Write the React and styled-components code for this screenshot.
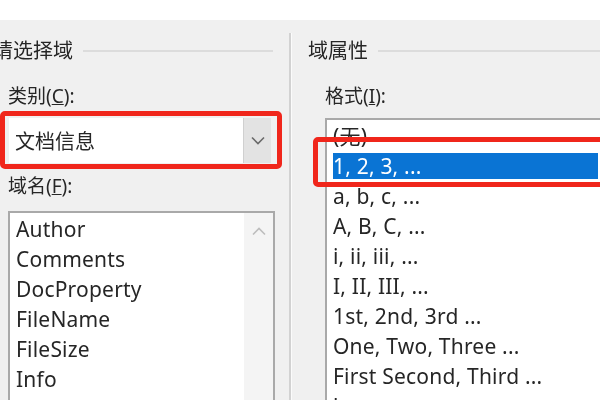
import styled, { createGlobalStyle } from "styled-components";

const GlobalStyle = createGlobalStyle`
  html, body {
    margin: 0;
    padding: 0;
    background: #f0f0f0;
  }
  *, *::before, *::after {
    box-sizing: border-box;
  }
`;

const fieldNames = ["Author", "Comments", "DocProperty", "FileName", "FileSize", "Info", "Keywords"];
const formats = [
  "(无)",
  "1, 2, 3, ...",
  "a, b, c, ...",
  "A, B, C, ...",
  "i, ii, iii, ...",
  "I, II, III, ...",
  "1st, 2nd, 3rd ...",
  "One, Two, Three ...",
  "First Second, Third ...",
  "hex ...",
];

const App = () => {
  return (
    <>
      <GlobalStyle />
      <Page>
        <TitleStrip />
        <Columns>
          <Pane $width="289px">
            <GroupHeader>
              <GroupTitle $offset={-7}>请选择域</GroupTitle>
              <GroupRule $gap={16} />
            </GroupHeader>
            <Label $top={21}>
              类别(<u>C</u>):
            </Label>
            <Highlight>
              <Combo>
                <ComboText>文档信息</ComboText>
                <ComboButton>
                  <svg width="14" height="9" viewBox="0 0 14 9">
                    <path d="M1 1.5 L7 7.5 L13 1.5" fill="none" stroke="#6a6a6a" strokeWidth="1.6" />
                  </svg>
                </ComboButton>
              </Combo>
            </Highlight>
            <Label $top={5}>
              域名(<u>F</u>):
            </Label>
            <FieldList>
              <Rows $inset={4}>
                {fieldNames.map((name) => (
                  <Row key={name}>{name}</Row>
                ))}
              </Rows>
              <ScrollTrack>
                <svg width="14" height="9" viewBox="0 0 14 9">
                  <path d="M1 7.5 L7 1.5 L13 7.5" fill="none" stroke="#bdbdbd" strokeWidth="1.6" />
                </svg>
              </ScrollTrack>
            </FieldList>
          </Pane>
          <Divider />
          <Pane $grow $pad={16}>
            <GroupHeader>
              <GroupTitle>域属性</GroupTitle>
              <GroupRule />
            </GroupHeader>
            <Label $top={21} $indent={17}>
              格式(<u>I</u>):
            </Label>
            <FormatList>
              <Rows $inset={4}>
                {formats.map((f, i) => (
                  <Row key={f} $selected={i === 1}>
                    {f}
                  </Row>
                ))}
              </Rows>
              <Marker />
            </FormatList>
          </Pane>
        </Columns>
      </Page>
    </>
  );
};
export default App;

const Page = styled.div`
  width: 600px;
  height: 400px;
  overflow: hidden;
  background: #f0f0f0;
  display: flex;
  flex-direction: column;
  font-family: "Noto Sans", "Noto Sans CJK SC", sans-serif;
  color: #262626;
  filter: blur(0.45px);
`;

const TitleStrip = styled.div`
  height: 20px;
  flex-shrink: 0;
  background: #fff;
`;

const Columns = styled.div`
  flex: 1;
  display: flex;
  min-height: 0;
`;

const Pane = styled.section`
  width: ${(p) => p.$width || "auto"};
  flex: ${(p) => (p.$grow ? "1" : "none")};
  padding: 19px 0 0 ${(p) => p.$pad || 0}px;
  display: flex;
  flex-direction: column;
  min-width: 0;
`;

const GroupHeader = styled.div`
  display: flex;
  align-items: center;
  gap: 10px;
  height: 24px;
`;

const GroupTitle = styled.span`
  font-size: 20px;
  line-height: 24px;
  white-space: nowrap;
  margin-left: ${(p) => p.$offset || 0}px;
`;

const GroupRule = styled.div`
  flex: 1;
  height: 2px;
  background: #dcdcdc;
  margin-right: ${(p) => p.$gap || 0}px;
`;

const Label = styled.div`
  font-size: 19px;
  line-height: 24px;
  margin-top: ${(p) => p.$top}px;
  padding-left: ${(p) => p.$indent || 8}px;
  white-space: nowrap;
`;

const Highlight = styled.div`
  margin: 3px 7px 0 0;
  border: 5px solid #f0261b;
  border-radius: 5px;
  padding: 2px 6px 1px 4px;
`;

const Combo = styled.div`
  display: flex;
  height: 45px;
  background: #fff;
`;

const ComboText = styled.div`
  flex: 1;
  display: flex;
  align-items: center;
  padding-left: 6px;
  font-size: 20px;
`;

const ComboButton = styled.div`
  width: 28px;
  display: flex;
  align-items: center;
  justify-content: center;
  background: #e3e3e3;
  border-left: 1px solid #d0d0d0;
`;

const FieldList = styled.div`
  flex: 1;
  display: flex;
  margin: 13px 14px 0 8px;
  border: 2px solid #a9a9a9;
  border-bottom: none;
  background: #fff;
`;

const Rows = styled.div`
  flex: 1;
  padding: 1px 0 0 ${(p) => p.$inset}px;
  min-width: 0;
`;

const Row = styled.div`
  height: 30px;
  line-height: 26px;
  padding: 2px 2px;
  font-size: 21px;
  letter-spacing: 0.2px;
  white-space: nowrap;
  background: ${(p) => (p.$selected ? "#0a74d4" : "transparent")};
  background-clip: content-box;
  color: ${(p) => (p.$selected ? "#fff" : "inherit")};
`;

const ScrollTrack = styled.div`
  width: 29px;
  background: #f4f4f4;
  display: flex;
  justify-content: center;
  padding-top: 14px;
`;

const Divider = styled.div`
  width: 3px;
  margin-top: 13px;
  background: #d2d2d2;
  border-right: 1px solid #fbfbfb;
`;

const FormatList = styled.div`
  position: relative;
  flex: 1;
  margin: 10px 0 0 17px;
  border: 2px solid #a9a9a9;
  border-right: none;
  border-bottom: none;
  background: #fff;
`;

const Marker = styled.div`
  position: absolute;
  left: -14px;
  right: -10px;
  top: 17px;
  height: 50px;
  border: 5px solid #f0261b;
  border-radius: 5px;
`;
